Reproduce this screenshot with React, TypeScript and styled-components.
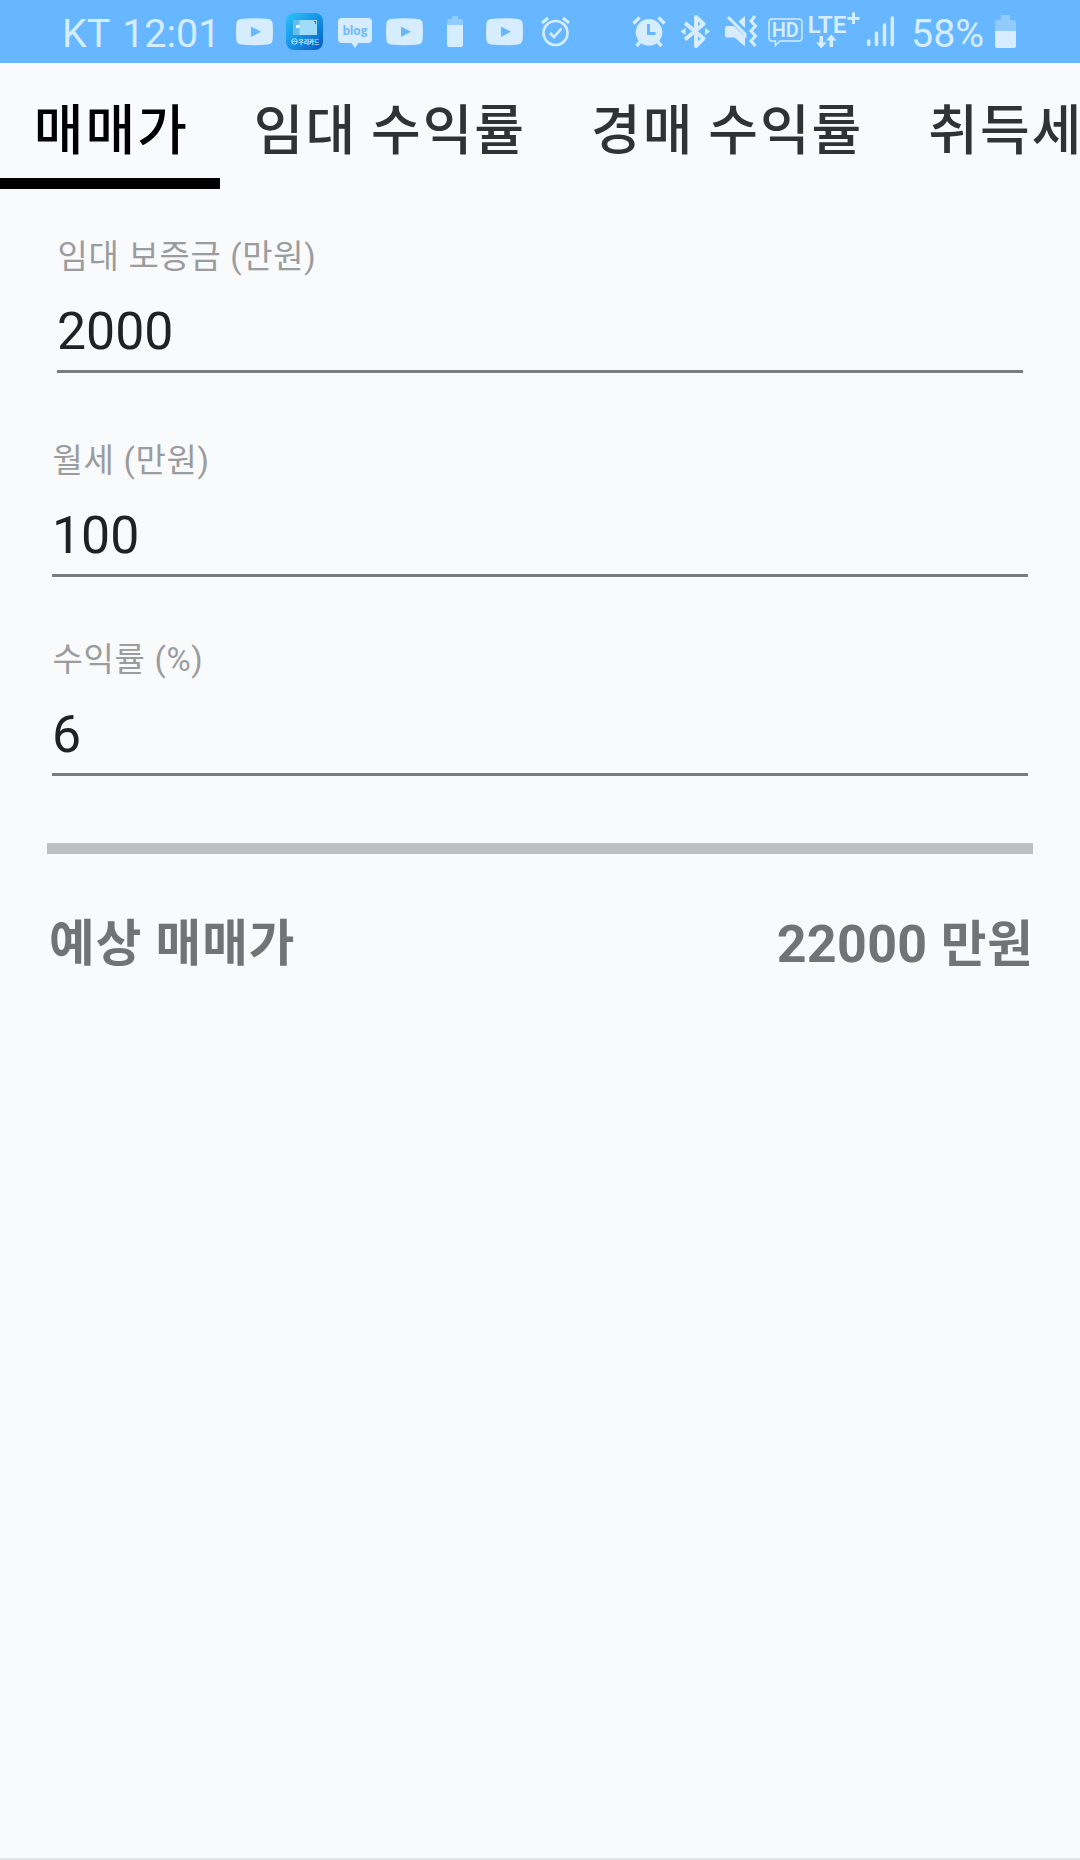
import React, { useState } from "react";
import styled, { createGlobalStyle } from "styled-components";

const FONT = 'Roboto, "Noto Sans CJK KR", sans-serif';
const INK = "#d6ecff";
const BAR = "#66b7ff";

const GlobalStyle = createGlobalStyle`
  * { box-sizing: border-box; }
  body { margin: 0; background: #f9fafc; font-family: ${FONT}; }
`;

const Screen = styled.div`
  display: flex;
  flex-direction: column;
  width: 1080px;
  height: 1860px;
  overflow: hidden;
  background: #f9fafc;
  border-bottom: 2px solid #e3e6e6;
`;

const StatusBar = styled.header`
  display: flex;
  flex: none;
  justify-content: space-between;
  height: 63px;
  padding: 0 57px 0 62px;
  background: ${BAR};
  color: ${INK};
`;

const StatusGroup = styled.div`
  display: flex;
`;

const StatusText = styled.span<{ $width: number }>`
  width: ${(p) => p.$width}px;
  font-size: 39.4px;
  line-height: 67px;
  word-spacing: 3px;
  white-space: nowrap;
`;

const Glyph = styled.svg`
  display: block;
  flex: none;
  height: 63px;
  fill: ${INK};
`;

const Tabs = styled.nav`
  display: flex;
  flex: none;
  height: 126px;
  overflow: hidden;
`;

const Tab = styled.button<{ $active: boolean }>`
  flex: none;
  height: 126px;
  padding: 11px 31.2px 0 33.8px;
  border: 0;
  border-bottom: 11px solid ${(p) => (p.$active ? "#000" : "transparent")};
  background: none;
  color: ${(p) => (p.$active ? "#000" : "#303234")};
  font: 500 54px/115px ${FONT};
  letter-spacing: 2px;
  word-spacing: -1.6px;
  white-space: nowrap;
`;

const Form = styled.main`
  display: flex;
  flex-direction: column;
  padding: 47px 47px 0;
`;

const Field = styled.label<{ $inset: number; $after: number }>`
  display: flex;
  flex-direction: column;
  margin: 0 ${(p) => p.$inset}px ${(p) => p.$after}px;
`;

const Caption = styled.span`
  height: 66px;
  padding-left: 0.6px;
  color: #9b9c9d;
  font-size: 33px;
  letter-spacing: 0.65px;
  line-height: 42px;
`;

const Value = styled.input`
  width: 100%;
  height: 71px;
  padding: 0 0 10px;
  border: 0;
  border-bottom: 3px solid #7b7c7e;
  border-radius: 0;
  outline: 0;
  background: none;
  color: #202123;
  font: 400 51.8px/58px ${FONT};
`;

const Divider = styled.hr`
  width: 100%;
  height: 11px;
  margin: 0;
  border: 0;
  background: #bebfc1;
`;

const Result = styled.div`
  display: flex;
  justify-content: space-between;
  margin-right: -1px;
  padding: 60px 0 0 2px;
  color: #727375;
  font-size: 49.6px;
  font-weight: 700;
  letter-spacing: 1px;
  line-height: 61px;
`;

const Digits = styled.span`
  font-size: 52px;
  letter-spacing: 0.3px;
`;

function YouTube({ x }: { x: number }) {
  return (
    <Glyph width={50} viewBox={`${x} 0 50 63`}>
      <path
        transform={`translate(${x + 6} 18)`}
        fillRule="evenodd"
        d="M5 1Q18.500-.6 32 1Q36 1.500 36.600 5Q37.400 13.500 36.600 22Q36 26 32 26.500Q18.500 28 5 26.500Q1 26 .4 22Q-.4 13.500 .4 5Q1 1.500 5 1ZM15 8.500V19L25 13.800Z"
      />
    </Glyph>
  );
}

function LeftIcons() {
  return (
    <>
      <YouTube x={230} />
      <Glyph width={50} viewBox="280 0 50 63">
        <defs>
          <linearGradient id="card" x1="0" y1="0" x2="1" y2="1">
            <stop offset="0" stopColor="#31c3fa" />
            <stop offset=".5" stopColor="#1493e4" />
            <stop offset="1" stopColor="#0759c5" />
          </linearGradient>
        </defs>
        <rect x="286" y="13" width="37" height="37" rx="8" fill="url(#card)" />
        <rect x="293" y="20" width="24" height="15" fill="#9edcf8" />
        <rect x="293" y="20" width="6.500" height="15" fill="#65bdec" />
        <rect x="296" y="25" width="3.500" height="3" fill="#fff" />
        <path d="M314 21h2v3h-1v-2h-1z" fill="#1b78b8" />
        <circle cx="294.500" cy="41.500" r="2.800" fill="none" stroke="#bcecff" strokeWidth="1" />
        <path d="M292 42q2.500-2 5 0" fill="none" stroke="#bcecff" />
        <text x="298.500" y="43.600" fontFamily="Noto Sans CJK KR" fontSize="5.600" fontWeight="700" fill="#e3f7ff">우리카드</text>
      </Glyph>
      <Glyph width={50} viewBox="330 0 50 63">
        <path d="M342 18h26q4 0 4 4v17q0 4-4 4h-9.500l-3.500 5-3.500-5H342q-4 0-4-4V22q0-4 4-4Z" />
        <text x="342.800" y="34.600" fontFamily="Lato" fontSize="12.500" fontWeight="900" textLength="24.500" fill="#70b9fb">blog</text>
      </Glyph>
      <YouTube x={380} />
      <Glyph width={50} viewBox="430 0 50 63">
        <path d="M452 16h6v3h3q2 0 2 2v5h-16v-5q0-2 2-2h3z" fill="#91cbff" />
        <path d="M447 25h16v20q0 2-2 2h-12q-2 0-2-2z" />
      </Glyph>
      <YouTube x={480} />
      <Glyph width={50} viewBox="530 0 50 63">
        <g fill="none" stroke={INK}>
          <circle cx="555.500" cy="33" r="12" strokeWidth="2.600" />
          <path d="m550 33 4 4 7.500-8.500" strokeWidth="2.600" />
          <path d="m542 23 6-5M569 23l-6-5" strokeWidth="3" />
        </g>
      </Glyph>
    </>
  );
}

function RightIcons() {
  return (
    <>
      <Glyph width={48} viewBox="625 0 48 63">
        <circle cx="649" cy="32.300" r="13.300" />
        <path d="m633.500 23.500 6-6M664.500 23.500l-6-6M640.500 41.500l-4 4.500M657.500 41.500l4 4.500" fill="none" stroke={INK} strokeWidth="3.400" />
        <path d="M648.500 24v9.500h7" fill="none" stroke={BAR} strokeWidth="3" />
      </Glyph>
      <Glyph width={46} viewBox="673 0 46 63">
        <path d="m685 23 18.500 15.500L696 46V17l7.500 7L685 39.500" fill="none" stroke={INK} strokeWidth="4" strokeLinejoin="round" />
        <path d="m680.500 31.500 5-3.500v7zM710 31.500l-5-3.500v7z" />
      </Glyph>
      <Glyph width={44} viewBox="719 0 44 63">
        <path d="M725 28q0-2 2-2h7l11 10.500v10l-10.500-9H727q-2 0-2-2zM738.500 21.500l6.500-5.500v12z" />
        <path d="m728 17 17 17v4" fill="none" stroke={INK} strokeWidth="3" />
        <path d="m755 16-4 5 4.500 5-4.500 5 4.500 5-4.500 5 4.500 5" fill="none" stroke={INK} strokeWidth="3" />
      </Glyph>
      <Glyph width={42} viewBox="763 0 42 63">
        <path d="M772 19h26.500q3.500 0 3.500 3.500v15q0 3.500-3.500 3.500H780l-4.500 4.500V41H772q-3 0-3-3.500v-15q0-3.500 3-3.500Z" fill="none" stroke={INK} strokeWidth="1.500" />
        <text x="771.800" y="37" fontFamily="Roboto" fontSize="20" fontWeight="600" textLength="27" lengthAdjust="spacingAndGlyphs">HD</text>
      </Glyph>
      <Glyph width={57} viewBox="805 0 57 63">
        <text x="807.500" y="33" fontFamily="Roboto" fontSize="24" fontWeight="600" textLength="39" lengthAdjust="spacingAndGlyphs">LTE</text>
        <path d="M852 12.500h3v4.500h4.600v2.800H855V24h-3v-4.200h-4.500V17h4.500zM819.500 36h3.500v6.500h3.500l-5.200 6-5.300-6h3.500zM829.500 47H833v-6.500h3.500l-5.200-6-5.300 6h3.500z" />
      </Glyph>
      <Glyph width={49} viewBox="862 0 49 63">
        <path d="M868.700 41v3.500M876.500 33v11.500M884.500 25v19.500M892.300 18v26.500" stroke={INK} strokeWidth="3.500" strokeLinecap="round" />
      </Glyph>
    </>
  );
}

const TABS = ["매매가", "임대 수익률", "경매 수익률", "취득세"];

export default function App() {
  const [active, setActive] = useState(0);
  const [deposit, setDeposit] = useState("2000");
  const [rent, setRent] = useState("100");
  const [rate, setRate] = useState("6");
  const price = Math.round((Number(rent) * 1200) / (Number(rate) || 1) + Number(deposit));

  return (
    <>
      <GlobalStyle />
      <Screen>
        <StatusBar>
          <StatusGroup>
            <StatusText $width={168}>KT 12:01</StatusText>
            <LeftIcons />
          </StatusGroup>
          <StatusGroup>
            <RightIcons />
            <StatusText $width={79}>58%</StatusText>
            <Glyph width={33} viewBox="990 0 33 63">
              <path d="M1001 15h9v5h4q2 0 2 2v9h-21v-9q0-2 2-2h4z" fill="#91cbff" />
              <path d="M995 31h21v15q0 2-2 2h-17q-2 0-2-2z" />
            </Glyph>
          </StatusGroup>
        </StatusBar>
        <Tabs>
          {TABS.map((name, i) => (
            <Tab key={name} $active={i === active} onClick={() => setActive(i)}>
              {name}
            </Tab>
          ))}
        </Tabs>
        <Form>
          <Field $inset={10} $after={67}>
            <Caption>임대 보증금 (만원)</Caption>
            <Value value={deposit} onChange={(e) => setDeposit(e.target.value)} />
          </Field>
          <Field $inset={5} $after={62}>
            <Caption>월세 (만원)</Caption>
            <Value value={rent} onChange={(e) => setRent(e.target.value)} />
          </Field>
          <Field $inset={5} $after={67}>
            <Caption>수익률 (%)</Caption>
            <Value value={rate} onChange={(e) => setRate(e.target.value)} />
          </Field>
          <Divider />
          <Result>
            <span>예상 매매가</span>
            <span>
              <Digits>{price}</Digits> 만원
            </span>
          </Result>
        </Form>
      </Screen>
    </>
  );
}
